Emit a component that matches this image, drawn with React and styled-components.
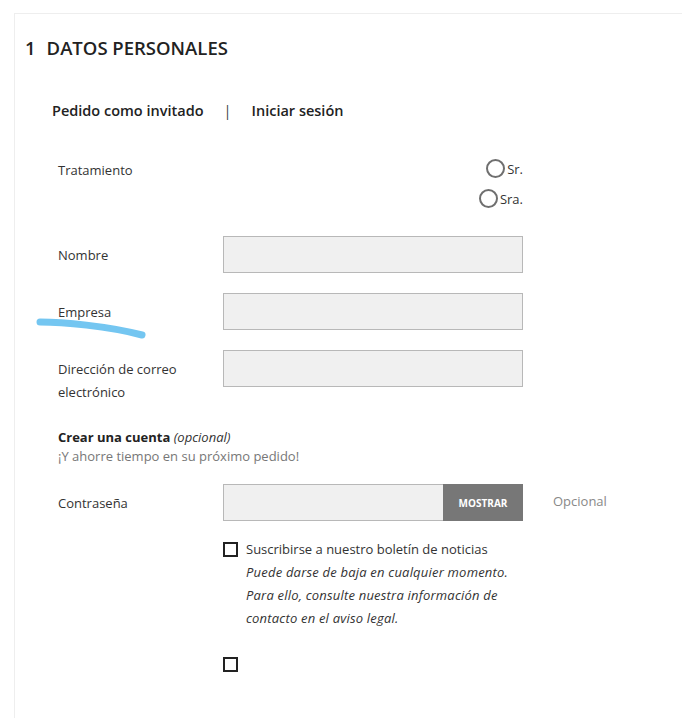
import styled, { createGlobalStyle } from 'styled-components';

const GlobalStyle = createGlobalStyle`
  html, body {
    margin: 0;
    padding: 0;
    background: #fff;
    font-family: 'Open Sans', 'Noto Sans', sans-serif;
    color: #333;
    overflow: hidden;
  }
  * { box-sizing: border-box; }
`;

const Page = styled.div`
  position: relative;
  padding: 13px 0 0 14px;
  height: 718px;
`;

const Panel = styled.section`
  border-top: 1px solid #eeeeee;
  border-left: 1px solid #eeeeee;
  height: 100%;
  padding: 25px 0 0 10px;
`;

const Title = styled.h2`
  margin: 0;
  font-size: 18.5px;
  font-weight: 600;
  line-height: 18px;
  color: #222;
`;

const Step = styled.span`
  margin-right: 11px;
`;

const Tabs = styled.nav`
  display: flex;
  align-items: center;
  gap: 20px;
  margin: 44px 0 0 27px;
  font-size: 14.5px;
  font-weight: 600;
  color: #222;
`;

const Divider = styled.span`
  font-weight: 400;
  color: #444;
`;

const Form = styled.form`
  margin: 39px 0 0 33px;
`;

const Row = styled.div`
  display: grid;
  grid-template-columns: 165px 300px auto;
  align-items: start;
  margin-bottom: ${(p) => p.$gap || 20}px;
`;

const Label = styled.label`
  font-size: 13px;
  line-height: 23px;
  color: #333;
  padding-top: ${(p) => p.$top ?? 8}px;
  max-width: 130px;
`;

const Radios = styled.div`
  display: flex;
  flex-direction: column;
  align-items: flex-end;
  gap: 11px;
`;

const RadioOption = styled.label`
  display: flex;
  align-items: center;
  gap: 2px;
  font-size: 13px;
  color: #333;
`;

const RadioCircle = styled.span`
  width: 19px;
  height: 19px;
  border: 2px solid #6f6f6f;
  border-radius: 50%;
`;

const Input = styled.div`
  height: 37px;
  background: #f0f0f0;
  border: 1px solid #b8b8b8;
`;

const PasswordBox = styled.div`
  display: flex;
  height: 37px;
  border: 1px solid #b8b8b8;
  background: #f0f0f0;
`;

const Fill = styled.div`
  flex: 1;
`;

const ShowButton = styled.div`
  width: 80px;
  background: #777;
  color: #fff;
  font-size: 10px;
  font-weight: 700;
  display: flex;
  align-items: center;
  justify-content: center;
  margin: -1px -1px -1px 0;
`;

const Hint = styled.span`
  font-size: 13px;
  color: #888;
  padding: 8px 0 0 30px;
`;

const Account = styled.div`
  margin-bottom: 18px;
  font-size: 13px;
  line-height: 19px;
`;

const Strong = styled.strong`
  font-weight: 700;
  color: #222;
`;

const Sub = styled.div`
  color: #777;
`;

const CheckRow = styled.div`
  display: flex;
  align-items: flex-start;
  gap: 8px;
  margin: 0 0 ${(p) => p.$gap || 0}px 165px;
`;

const Box = styled.span`
  flex: none;
  width: 15px;
  height: 15px;
  border: 2px solid #222;
  margin-top: 4px;
`;

const CheckText = styled.div`
  font-size: 13px;
  line-height: 23px;
  color: #333;
`;

const Note = styled.div`
  font-style: italic;
  letter-spacing: 0.2px;
  max-width: 280px;
`;

const Marker = styled.svg`
  position: absolute;
  left: 0;
  top: 0;
  pointer-events: none;
`;

export default function App() {
  return (
    <>
      <GlobalStyle />
      <Page>
        <Panel>
          <Title>
            <Step>1</Step>DATOS PERSONALES
          </Title>
          <Tabs>
            <span>Pedido como invitado</span>
            <Divider>|</Divider>
            <span>Iniciar sesión</span>
          </Tabs>
          <Form>
            <Row $gap={28}>
              <Label $top={0}>Tratamiento</Label>
              <Radios>
                <RadioOption>
                  <RadioCircle />
                  Sr.
                </RadioOption>
                <RadioOption>
                  <RadioCircle />
                  Sra.
                </RadioOption>
              </Radios>
            </Row>
            <Row>
              <Label>Nombre</Label>
              <Input />
            </Row>
            <Row>
              <Label>Empresa</Label>
              <Input />
            </Row>
            <Row $gap={24}>
              <Label>Dirección de correo electrónico</Label>
              <Input />
            </Row>
            <Account>
              <Strong>Crear una cuenta</Strong> <i>(opcional)</i>
              <Sub>¡Y ahorre tiempo en su próximo pedido!</Sub>
            </Account>
            <Row $gap={17}>
              <Label>Contraseña</Label>
              <PasswordBox>
                <Fill />
                <ShowButton>MOSTRAR</ShowButton>
              </PasswordBox>
              <Hint>Opcional</Hint>
            </Row>
            <CheckRow $gap={23}>
              <Box />
              <CheckText>
                Suscribirse a nuestro boletín de noticias
                <Note>
                  Puede darse de baja en cualquier momento. Para ello, consulte
                  nuestra información de contacto en el aviso legal.
                </Note>
              </CheckText>
            </CheckRow>
            <CheckRow>
              <Box />
            </CheckRow>
          </Form>
        </Panel>
        <Marker width="682" height="718">
          <path
            d="M40 322 C 62 322, 108 326, 142 335"
            fill="none"
            stroke="#74c6f1"
            strokeWidth="7"
            strokeLinecap="round"
          />
        </Marker>
      </Page>
    </>
  );
}
